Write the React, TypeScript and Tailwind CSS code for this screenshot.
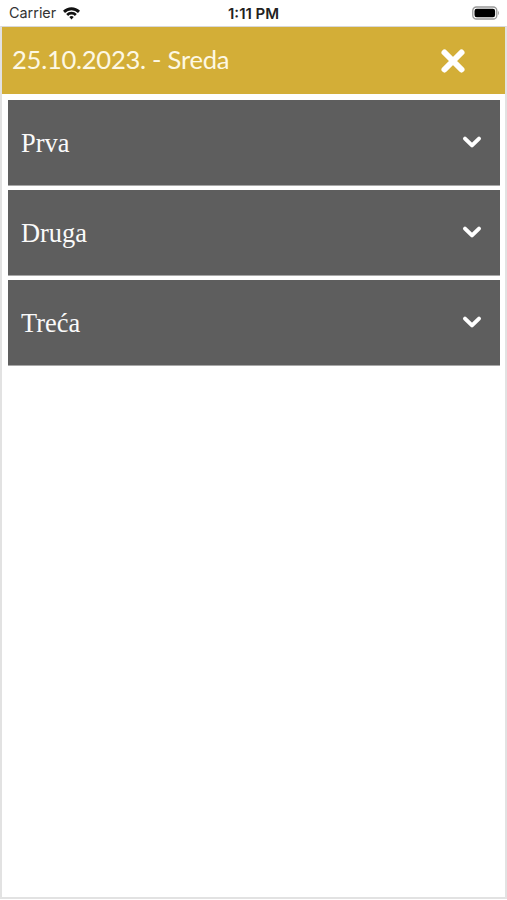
function Chevron() {
  return (
    <svg width="20" height="14" viewBox="0 0 20 14" className="block">
      <path d="M3 3.6 L10 10.4 L17 3.6" fill="none" stroke="#fff" strokeWidth="4" strokeLinecap="round" strokeLinejoin="round" />
    </svg>
  );
}

function Row({ label }: { label: string }) {
  return (
    <div className="h-[86px] bg-[#5e5e5e] border-b border-[#a8a8a8] flex items-center justify-between pl-[13px] pr-[18px]">
      <span className="text-[#fafafa] text-[26.4px] leading-none translate-y-[1px] font-['Liberation_Serif',serif]">{label}</span>
      <span className="-translate-y-[1px]"><Chevron /></span>
    </div>
  );
}

export default function App() {
  return (
    <div className="w-[507px] h-[900px] bg-white flex flex-col overflow-hidden font-['Liberation_Sans',sans-serif]">
      <div className="h-[26px] shrink-0 flex items-center justify-between pl-[9px] pr-[7px] text-[#1c1c1c] relative">
        <div className="flex items-center gap-[6px]">
          <span className="text-[14.4px] leading-none font-['Inter',sans-serif] text-[#333]">Carrier</span>
          <svg width="19" height="14" viewBox="0 0 19 14">
            <path d="M1 4.8 A12 12 0 0 1 18 4.8 L16 6.9 A9.2 9.2 0 0 0 3 6.9 Z" fill="#111" />
            <path d="M4.2 8 A7.4 7.4 0 0 1 14.8 8 L12.9 10 A4.8 4.8 0 0 0 6.1 10 Z" fill="#111" />
            <path d="M7.3 11.1 A3 3 0 0 1 11.7 11.1 L9.5 13.5 Z" fill="#111" />
          </svg>
        </div>
        <span className="absolute left-[228px] top-[6px] text-[15px] leading-none font-semibold font-['Inter',sans-serif] text-[#222]">1:11 PM</span>
        <svg width="28" height="14" viewBox="0 0 28 14">
          <rect x="0.8" y="1" width="24" height="12" rx="3.6" fill="none" stroke="#999" strokeWidth="1.3" />
          <rect x="2.5" y="2.7" width="20.6" height="8.6" rx="2.2" fill="#000" />
          <path d="M26 5 C27.2 5.4 27.2 8.6 26 9 Z" fill="#999" />
        </svg>
      </div>

      <div className="flex-1 mb-[1px] border-x-2 border-b-2 border-[#e2e2e2] flex flex-col border-t border-t-[#d8d8d8]">
        <div className="h-[67px] shrink-0 bg-[#d3ae37] flex items-center justify-between pl-[10px] pr-[39px]">
          <span className="text-[#fdf8e4] text-[25.6px] leading-none tracking-[-0.28px] -translate-y-[1px] font-['Lato',sans-serif]">25.10.2023. - Sreda</span>
          <svg width="26" height="26" viewBox="0 0 26 26">
            <path d="M4.5 4.5 L21.5 21.5 M21.5 4.5 L4.5 21.5" fill="none" stroke="#fff" strokeWidth="6" strokeLinecap="round" />
          </svg>
        </div>
        <div className="flex flex-col gap-[4px] pt-[6px] pl-[6px] pr-[5px]">
          <Row label="Prva" />
          <Row label="Druga" />
          <Row label="Treća" />
        </div>
      </div>
    </div>
  );
}
